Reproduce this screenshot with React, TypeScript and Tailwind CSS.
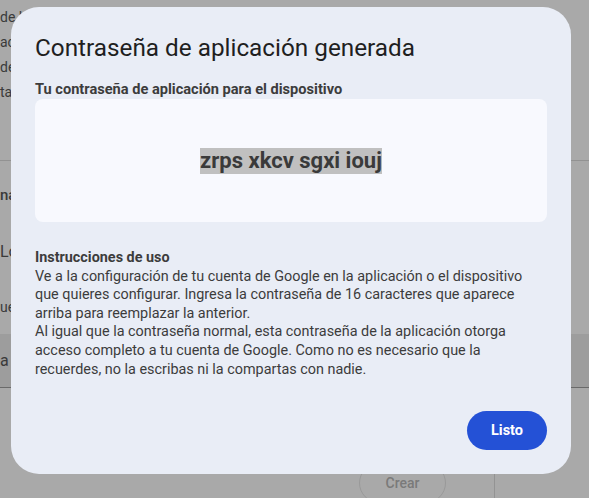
import React from 'react';

const BackgroundPage: React.FC = () => (
  <div className="flex h-full flex-col text-[#3a3a3a]">
    <div className="flex h-[463px] shrink-0 flex-col">
      <div className="flex w-[22px] flex-col overflow-hidden pt-[5px] text-[14px] leading-[25px]">
        <span className="whitespace-nowrap">de la</span>
        <span className="whitespace-nowrap">acc</span>
        <span className="whitespace-nowrap">de</span>
        <span className="whitespace-nowrap">ta</span>
      </div>
      <div className="mt-[55px] border-t border-[#929292]" />
      <span className="mt-[24px] whitespace-nowrap text-[15px] font-medium leading-[20px]">na</span>
      <span className="mt-[36px] whitespace-nowrap text-[16px] leading-[22px]">Lo</span>
      <span className="mt-[34px] whitespace-nowrap text-[14px] leading-[20px]">ue</span>
      <div className="mt-[17px] flex h-[54px] items-center border-b border-[#6a6a6a] bg-[#9d9d9d]">
        <span className="text-[16px] leading-[20px]">a</span>
      </div>
    </div>
    <div className="flex flex-1 items-start pl-[359px]">
      <div className="flex h-[40px] w-[87px] shrink-0 items-center justify-center rounded-full border border-[#999999] text-[14px] font-medium text-[#7a7a7a]">
        Crear
      </div>
      <div className="ml-[48px] h-full border-l border-[#939393]" />
    </div>
  </div>
);

const Dialog: React.FC = () => (
  <div className="absolute left-[11px] top-[7px] flex h-[467px] w-[560px] flex-col rounded-[28px] bg-[#e9edf6] px-6 pt-[25px] pb-6">
    <h1 className="text-[24.3px] font-normal leading-[32px] text-[#1f1f1f]">Contraseña de aplicación generada</h1>
    <p className="mt-4 text-[14.6px] font-bold leading-[18px] text-[#3c3c3c]">
      Tu contraseña de aplicación para el dispositivo
    </p>
    <div className="mt-[1px] flex h-[123px] items-center justify-center rounded-lg bg-[#f8f9fe]">
      <span className="bg-[#c0c0c0] text-[22px] font-bold leading-[26px] text-[#3a3a3a]">zrps xkcv sgxi iouj</span>
    </div>
    <div className="mt-[27px] text-[14.4px] leading-[18.6px] text-[#3c3c3c]">
      <p className="font-bold">Instrucciones de uso</p>
      <p>
        Ve a la configuración de tu cuenta de Google en la aplicación o el dispositivo
        <br />
        que quieres configurar. Ingresa la contraseña de 16 caracteres que aparece
        <br />
        arriba para reemplazar la anterior.
      </p>
      <p>
        Al igual que la contraseña normal, esta contraseña de la aplicación otorga
        <br />
        acceso completo a tu cuenta de Google. Como no es necesario que la
        <br />
        recuerdes, no la escribas ni la compartas con nadie.
      </p>
    </div>
    <div className="mt-auto flex justify-end">
      <button className="h-[39px] w-[80px] rounded-full bg-[#2451d6] text-[14.5px] font-bold text-white">Listo</button>
    </div>
  </div>
);

export default function App() {
  return (
    <div className="relative h-[498px] w-[589px] overflow-hidden bg-[#a9a9a9] font-['Roboto',sans-serif]">
      <BackgroundPage />
      <Dialog />
    </div>
  );
}
